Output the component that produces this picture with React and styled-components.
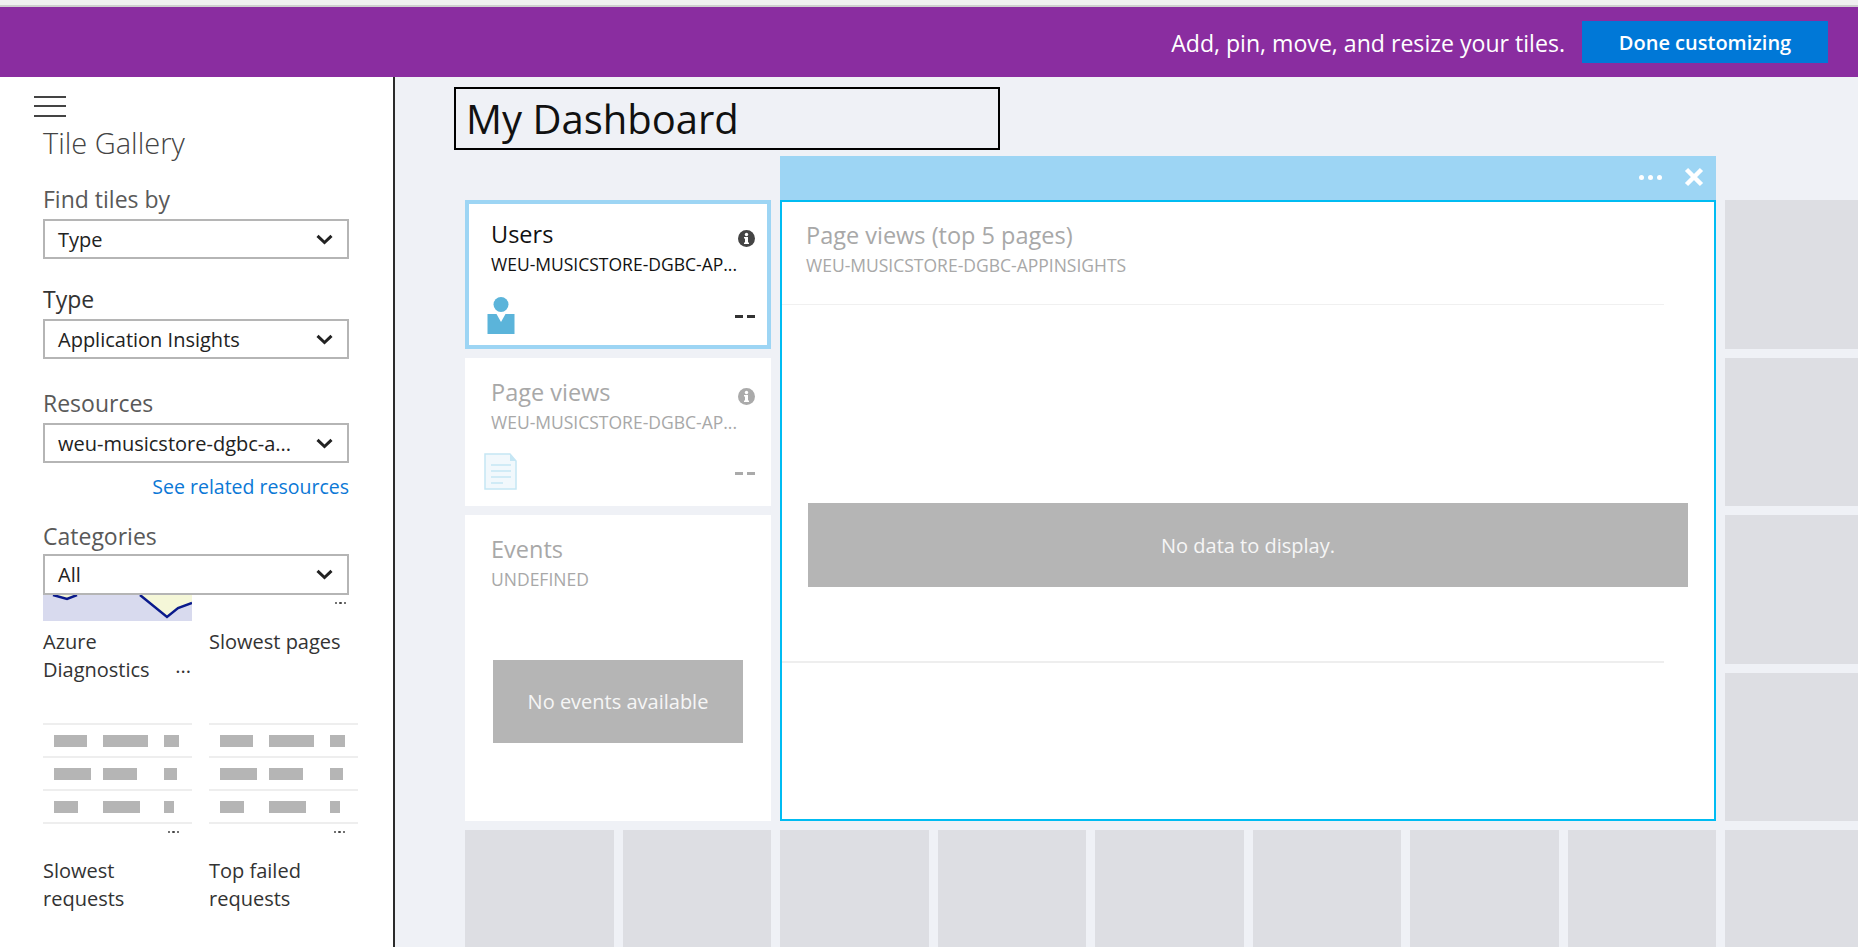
import React from 'react';
import styled, { createGlobalStyle } from 'styled-components';

const GlobalStyle = createGlobalStyle`
  html, body {
    margin: 0;
    padding: 0;
    height: 100%;
    overflow: hidden;
    background: #eff1f6;
    font-family: "Open Sans", "Noto Sans", sans-serif;
  }
  * { box-sizing: border-box; }
`;

const Page = styled.div`
  width: 1858px;
  height: 947px;
  display: flex;
  flex-direction: column;
  overflow: hidden;
`;

const BrowserEdge = styled.div`
  height: 7px;
  flex: none;
  background: #f0f0f0;
  border-bottom: 2px solid #cfcfcf;
`;

const TopBar = styled.header`
  height: 70px;
  flex: none;
  background: #8a2da0;
  display: flex;
  align-items: center;
  justify-content: flex-end;
  padding-right: 30px;
  gap: 17px;
  color: #fff;
`;

const Hint = styled.span`
  font-size: 23.1px;
  padding-top: 1px;
`;

const DoneButton = styled.button`
  width: 246px;
  height: 42px;
  border: 0;
  padding: 1px 0 0;
  background: #0078d7;
  color: #fff;
  font: 600 20px "Open Sans", sans-serif;
`;

const Body = styled.div`
  flex: 1;
  display: flex;
  min-height: 0;
`;

const Sidebar = styled.aside`
  width: 395px;
  flex: none;
  background: #fff;
  border-right: 2px solid #2b2b2b;
  padding: 19px 0 0 43px;
  overflow: hidden;
`;

const Hamburger = styled.div`
  width: 32px;
  height: 21px;
  margin-left: -9px;
  border-top: 2px solid #444;
  border-bottom: 2px solid #444;
  position: relative;
  &::after {
    content: "";
    position: absolute;
    left: 0;
    right: 0;
    top: 7px;
    height: 2px;
    background: #444;
  }
`;

const GalleryTitle = styled.h2`
  margin: 8px 0 0 0;
  font-size: 29px;
  line-height: 36px;
  font-weight: 300;
  color: #444;
`;

const FieldLabel = styled.div`
  margin: ${(p) => p.$top}px 0 ${(p) => p.$bottom ?? 4}px 0;
  font-size: 23px;
  line-height: 32px;
  color: ${(p) => p.$color || '#595959'};
`;

const SelectBox = styled.div`
  width: 306px;
  height: ${(p) => p.$height || 40}px;
  border: 2px solid #b5b5b5;
  background: #fff;
  display: flex;
  align-items: center;
  justify-content: space-between;
  padding: 0 14px 0 13px;
  font-size: 20px;
  color: #222;
`;

const RelatedLink = styled.a`
  display: block;
  width: 306px;
  margin-top: 9px;
  text-align: right;
  font-size: 19.5px;
  line-height: 30px;
  color: #0b78d6;
`;

const Gallery = styled.div`
  display: grid;
  grid-template-columns: 149px 149px;
  column-gap: 17px;
  width: 320px;
`;

const Thumb = styled.div`
  height: ${(p) => p.$height}px;
  position: relative;
`;

const MoreDots = styled.span`
  position: absolute;
  right: ${(p) => p.$right}px;
  bottom: ${(p) => p.$bottom}px;
  display: flex;
  gap: 2px;
  i {
    width: 2.5px;
    height: 2.5px;
    background: #444;
    border-radius: 50%;
  }
`;

const TileName = styled.div`
  font-size: 20px;
  line-height: 28px;
  color: #333;
  height: ${(p) => p.$height}px;
  margin-top: ${(p) => p.$top}px;
  position: relative;
`;

const Ellipsis = styled.span`
  position: absolute;
  right: 1px;
  top: 24px;
`;

const TableThumb = styled.div`
  height: 99px;
  border-top: 2px solid #eeeeee;
`;

const TableRow = styled.div`
  height: 33px;
  border-bottom: 2px solid #eeeeee;
  padding: 10px 0 0 11px;
  display: grid;
  grid-template-columns: 49px 61px auto;
  justify-content: start;
`;

const TableBar = styled.span`
  display: block;
  height: 12px;
  background: #b5b5b5;
`;

const Main = styled.main`
  flex: 1;
  min-width: 0;
  padding: 10px 0 0 59px;
  overflow: hidden;
`;

const TitleInput = styled.div`
  width: 546px;
  height: 63px;
  border: 2px solid #000;
  background: #eff1f6;
  padding-left: 10px;
  font-size: 40px;
  line-height: 60px;
  color: #111;
`;

const TileGrid = styled.div`
  margin: 50px 0 0 11px;
  display: grid;
  grid-template-columns: repeat(9, 148.5px);
  grid-auto-rows: 148.5px;
  gap: 9px;
`;

const Placeholder = styled.div`
  background: #dddee3;
`;

const Tile = styled.section`
  grid-column: span 2;
  grid-row: span ${(p) => p.$rows || 1};
  background: #fff;
  position: relative;
  padding: ${(p) => (p.$selected ? '14px 0 0 22px' : '18px 0 0 26px')};
  border: ${(p) => (p.$selected ? '4px solid #9dd5f4' : '0')};
  color: ${(p) => (p.$dim ? '#a8a8a8' : '#111')};
`;

const TileTitle = styled.div`
  font-size: 23.5px;
  line-height: 32px;
  white-space: nowrap;
`;

const TileSub = styled.div`
  font-size: 17.5px;
  line-height: 26px;
  margin-top: 1px;
  white-space: nowrap;
`;

const InfoBadge = styled.span`
  position: absolute;
  right: ${(p) => p.$offset}px;
  top: ${(p) => p.$top}px;
  width: 17px;
  height: 17px;
  display: flex;
`;

const TileIcon = styled.span`
  position: absolute;
  left: ${(p) => p.$left}px;
  bottom: ${(p) => p.$bottom}px;
  display: flex;
`;

const Dashes = styled.span`
  position: absolute;
  right: ${(p) => p.$right}px;
  bottom: ${(p) => p.$bottom}px;
  display: flex;
  gap: 4px;
  i {
    width: 8px;
    height: 3px;
    background: ${(p) => p.$color};
  }
`;

const EmptyBox = styled.div`
  background: #b5b5b5;
  color: #f6f6f6;
  display: flex;
  align-items: center;
  justify-content: center;
  width: ${(p) => p.$width}px;
  height: ${(p) => p.$height}px;
  font-size: 20px;
`;

const EventsEmpty = styled(EmptyBox)`
  margin: 68px 0 0 2px;
`;

const PanelTile = styled.section`
  grid-column: span 6;
  grid-row: span 4;
  background: #fff;
  border: 2px solid #00bcf2;
  position: relative;
  display: flex;
  flex-direction: column;
`;

const PanelHeader = styled.div`
  position: absolute;
  left: -2px;
  right: -2px;
  top: -46px;
  height: 44px;
  background: #9dd5f4;
  display: flex;
  align-items: center;
  justify-content: flex-end;
  gap: 22px;
  padding: 0 12px 2px 0;
`;

const HeaderDots = styled.span`
  display: flex;
  gap: 4px;
  i {
    width: 5px;
    height: 5px;
    background: #fff;
    border-radius: 50%;
  }
`;

const PanelHead = styled.div`
  height: 103px;
  margin-right: 50px;
  padding: 17px 0 0 24px;
  border-bottom: 1px solid #f0f0f0;
  color: #a8a8a8;
`;

const PanelChart = styled.div`
  height: 358px;
  margin-right: 50px;
  padding: 198px 0 0 26px;
  border-bottom: 2px solid #eeeeee;
`;

function Chevron() {
  return (
    <svg width="17" height="11" viewBox="0 0 17 11" fill="none">
      <path d="M1.5 1.8 L8.5 8.5 L15.5 1.8" stroke="#222" strokeWidth="3" />
    </svg>
  );
}

function InfoIcon({ color }) {
  return (
    <svg width="17" height="17" viewBox="0 0 17 17">
      <circle cx="8.5" cy="8.5" r="8.5" fill={color} />
      <rect x="7" y="7" width="3" height="7" fill="#fff" />
      <rect x="6" y="7" width="2" height="1.5" fill="#fff" />
      <rect x="6" y="12.5" width="5" height="1.5" fill="#fff" />
      <circle cx="8.5" cy="4.5" r="1.7" fill="#fff" />
    </svg>
  );
}

function PersonIcon() {
  return (
    <svg width="28" height="37" viewBox="0 0 28 37">
      <circle cx="14" cy="7.5" r="7.5" fill="#5bb4da" />
      <path d="M0.5 17 H9.5 L14 25 L18.5 17 H27.5 V37 H0.5 Z" fill="#5bb4da" />
    </svg>
  );
}

function DocIcon() {
  return (
    <svg width="33" height="37" viewBox="0 0 33 37">
      <path d="M1 1 H26 L32 8 V36 H1 Z" fill="#f1f8fc" stroke="#c5e6f4" strokeWidth="1.5" />
      <path d="M26 1 V8 H32 Z" fill="#c5e6f4" />
      <path d="M7 12 H27 M7 18 H27 M7 24 H27 M7 30 H19" stroke="#c5e6f4" strokeWidth="1.5" />
    </svg>
  );
}

function ChartThumb() {
  return (
    <svg width="149" height="26" viewBox="0 0 149 26">
      <rect width="149" height="26" fill="#d8daee" />
      <path d="M10 0 L24 4 L34 0 Z M97 0 L124 22 L135 13 L149 8 V0 Z" fill="#f5f7d8" />
      <path d="M10 0 L24 4 L34 0 M97 0 L124 22 L135 13 L149 8" fill="none" stroke="#0a1a8c" strokeWidth="2.5" />
    </svg>
  );
}

function CloseIcon() {
  return (
    <svg width="20" height="20" viewBox="0 0 20 20">
      <path d="M2.5 2.5 L17.5 17.5 M17.5 2.5 L2.5 17.5" stroke="#fff" strokeWidth="4.5" />
    </svg>
  );
}

const Dots = ({ right, bottom }) => (
  <MoreDots $right={right} $bottom={bottom}><i /><i /><i /></MoreDots>
);

const tableRows = [
  [33, 45, 15],
  [37, 34, 13],
  [24, 37, 10],
];

function TableThumbnail() {
  return (
    <Thumb $height={115}>
      <TableThumb>
        {tableRows.map((bars, i) => (
          <TableRow key={i}>
            {bars.map((w, j) => (
              <TableBar key={j} style={{ width: w }} />
            ))}
          </TableRow>
        ))}
      </TableThumb>
      <Dots right={13} bottom={5} />
    </Thumb>
  );
}

export default function App() {
  return (
    <Page>
      <GlobalStyle />
      <BrowserEdge />
      <TopBar>
        <Hint>Add, pin, move, and resize your tiles.</Hint>
        <DoneButton>Done customizing</DoneButton>
      </TopBar>
      <Body>
        <Sidebar>
          <Hamburger />
          <GalleryTitle>Tile Gallery</GalleryTitle>
          <FieldLabel $top={22}>Find tiles by</FieldLabel>
          <SelectBox>Type<Chevron /></SelectBox>
          <FieldLabel $top={24} $color="#333">Type</FieldLabel>
          <SelectBox>Application Insights<Chevron /></SelectBox>
          <FieldLabel $top={28}>Resources</FieldLabel>
          <SelectBox>weu-musicstore-dgbc-a...<Chevron /></SelectBox>
          <RelatedLink>See related resources</RelatedLink>
          <FieldLabel $top={18} $bottom={2}>Categories</FieldLabel>
          <SelectBox $height={41}>All<Chevron /></SelectBox>
          <Gallery>
            <Thumb $height={26}>
              <ChartThumb />
            </Thumb>
            <Thumb $height={26}>
              <Dots right={12} bottom={17} />
            </Thumb>
            <TileName $height={95} $top={7}>
              Azure<br />Diagnostics<Ellipsis>...</Ellipsis>
            </TileName>
            <TileName $height={95} $top={7}>Slowest pages</TileName>
            <TableThumbnail />
            <TableThumbnail />
            <TileName $height={60} $top={19}>Slowest<br />requests</TileName>
            <TileName $height={60} $top={19}>Top failed<br />requests</TileName>
          </Gallery>
        </Sidebar>
        <Main>
          <TitleInput>My Dashboard</TitleInput>
          <TileGrid>
            <Tile $selected>
              <TileTitle>Users</TileTitle>
              <TileSub>WEU-MUSICSTORE-DGBC-AP...</TileSub>
              <InfoBadge $offset={12} $top={26}><InfoIcon color="#444" /></InfoBadge>
              <TileIcon $left={18} $bottom={11}><PersonIcon /></TileIcon>
              <Dashes $right={12} $bottom={27} $color="#333"><i /><i /></Dashes>
            </Tile>
            <PanelTile>
              <PanelHeader>
                <HeaderDots><i /><i /><i /></HeaderDots>
                <CloseIcon />
              </PanelHeader>
              <PanelHead>
                <TileTitle>Page views (top 5 pages)</TileTitle>
                <TileSub>WEU-MUSICSTORE-DGBC-APPINSIGHTS</TileSub>
              </PanelHead>
              <PanelChart>
                <EmptyBox $width={880} $height={84}>No data to display.</EmptyBox>
              </PanelChart>
            </PanelTile>
            <Placeholder />
            <Tile $dim>
              <TileTitle>Page views</TileTitle>
              <TileSub>WEU-MUSICSTORE-DGBC-AP...</TileSub>
              <InfoBadge $offset={16} $top={30}><InfoIcon color="#aaa" /></InfoBadge>
              <TileIcon $left={19} $bottom={16}><DocIcon /></TileIcon>
              <Dashes $right={16} $bottom={31} $color="#aaa"><i /><i /></Dashes>
            </Tile>
            <Placeholder />
            <Tile $dim $rows={2}>
              <TileTitle>Events</TileTitle>
              <TileSub>UNDEFINED</TileSub>
              <EventsEmpty $width={250} $height={83}>No events available</EventsEmpty>
            </Tile>
            <Placeholder />
            <Placeholder />
            {Array.from({ length: 9 }, (_, i) => <Placeholder key={i} />)}
          </TileGrid>
        </Main>
      </Body>
    </Page>
  );
}
